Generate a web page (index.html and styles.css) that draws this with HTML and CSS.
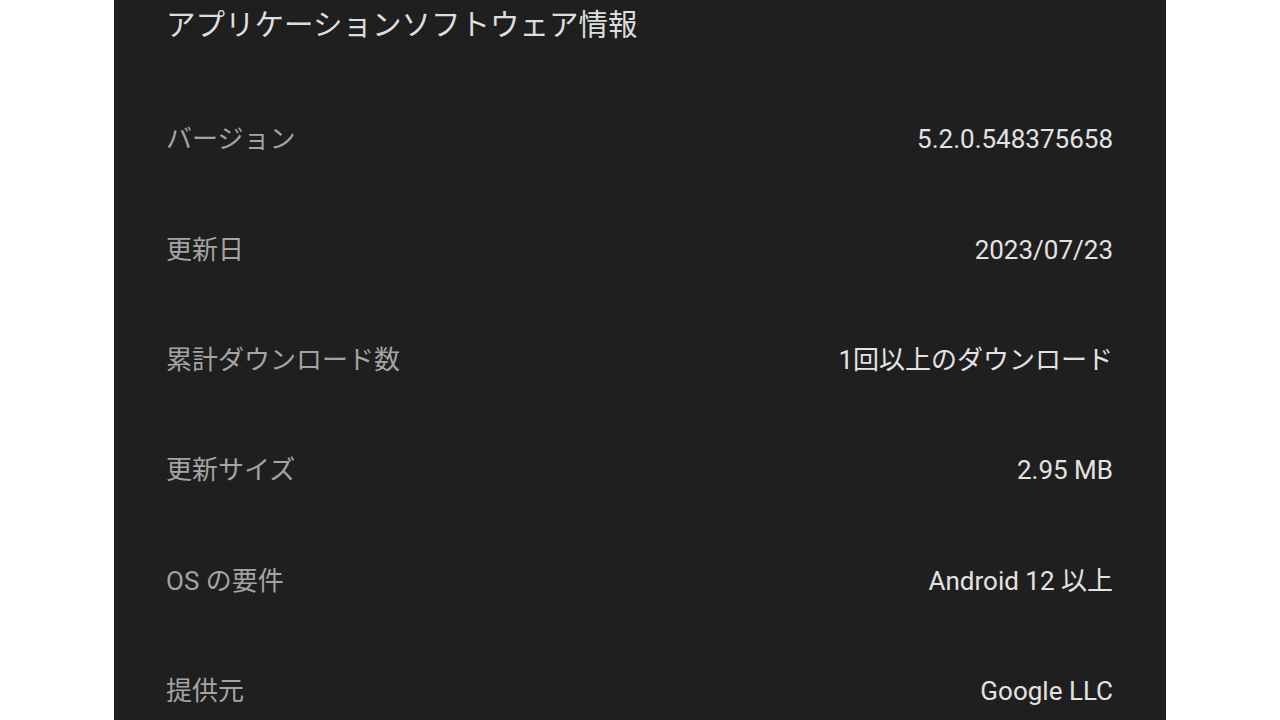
FILE: index.html
```html
<!DOCTYPE html>
<html lang="ja">
<head>
<meta charset="utf-8">
<title>アプリケーションソフトウェア情報</title>
<link rel="stylesheet" href="styles.css">
</head>
<body>
<main class="panel">
  <h1 class="title">アプリケーションソフトウェア情報</h1>
  <dl class="info">
    <div class="row"><dt class="label">バージョン</dt><dd class="value">5.2.0.548375658</dd></div>
    <div class="row"><dt class="label">更新日</dt><dd class="value">2023/07/23</dd></div>
    <div class="row"><dt class="label">累計ダウンロード数</dt><dd class="value">1回以上のダウンロード</dd></div>
    <div class="row"><dt class="label">更新サイズ</dt><dd class="value">2.95 MB</dd></div>
    <div class="row"><dt class="label">OS の要件</dt><dd class="value">Android 12 以上</dd></div>
    <div class="row"><dt class="label">提供元</dt><dd class="value">Google LLC</dd></div>
  </dl>
</main>
</body>
</html>
```
FILE: styles.css
```css
html, body {
  margin: 0;
  padding: 0;
  background: #ffffff;
  height: 100%;
  overflow: hidden;
}
body {
  font-family: Roboto, "Noto Sans CJK JP", sans-serif;
}
.panel {
  box-sizing: border-box;
  width: 1052px;
  height: 720px;
  margin-left: 114px;
  background: #1f1f1f;
  padding: 0 53px 0 52px;
}
.title {
  margin: 0;
  height: 50px;
  line-height: 50px;
  font-size: 29.5px;
  font-weight: 400;
  color: #dedede;
}
.info {
  margin: 34px 0 0 0;
}
.row {
  display: flex;
  justify-content: space-between;
  align-items: center;
  height: 110.4px;
}
.label, .value {
  margin: 0;
  font-size: 26px;
  line-height: 36px;
}
.label {
  color: #a4a4a4;
}
.value {
  color: #e3e3e3;
}
```
